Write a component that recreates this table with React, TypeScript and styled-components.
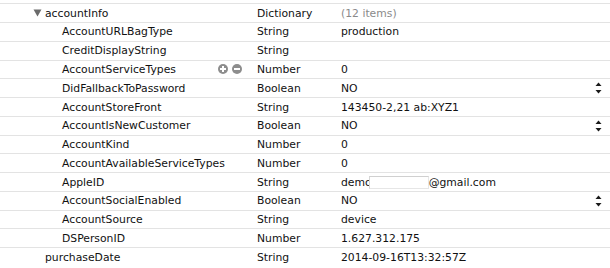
import React from "react";
import styled, { createGlobalStyle } from "styled-components";

const Global = createGlobalStyle`
  html, body { margin: 0; padding: 0; background: #ffffff; }
  body { font-family: "DejaVu Sans", "Liberation Sans", sans-serif; }
`;

const Table = styled.div`
  width: 610px;
  height: 268px;
  overflow: hidden;
  padding-top: 3.3px;
  box-sizing: border-box;
  background: #ffffff;
`;

const Row = styled.div`
  display: grid;
  grid-template-columns: 257px 84px 1fr 23px;
  align-items: center;
  height: 18.77px;
  box-sizing: border-box;
  border-top: 1px solid #e3e3e3;
  font-size: 10.8px;
  color: #111111;
  white-space: nowrap;
`;

const KeyCell = styled.div<{ $level: number }>`
  display: flex;
  align-items: center;
  padding-left: ${(p) => (p.$level === 0 ? 33 : 50)}px;
  padding-right: 15px;
  height: 100%;
`;

const Disclosure = styled.span`
  display: flex;
  align-items: center;
  width: 12px;
  flex: none;
`;

const KeyText = styled.span`
  flex: 1;
`;

const Actions = styled.span`
  display: flex;
  gap: 4px;
  align-items: center;
`;

const RoundButton = styled.span`
  width: 10px;
  height: 10px;
  border-radius: 50%;
  background: #8d8d8d;
  position: relative;
  display: inline-block;
  &::before {
    content: "";
    position: absolute;
    left: 2px;
    top: 4px;
    width: 6px;
    height: 2px;
    background: #ffffff;
  }
`;

const PlusButton = styled(RoundButton)`
  &::after {
    content: "";
    position: absolute;
    left: 4px;
    top: 2px;
    width: 2px;
    height: 6px;
    background: #ffffff;
  }
`;

const TypeCell = styled.div``;

const ValueCell = styled.div<{ $muted?: boolean }>`
  color: ${(p) => (p.$muted ? "#8a8a8a" : "#111111")};
  display: flex;
  align-items: center;
`;

const Redacted = styled.span`
  display: inline-block;
  width: 60px;
  height: 13px;
  margin-left: -3px;
  box-sizing: border-box;
  background: #ffffff;
  border: 1px solid #e6e6e6;
  border-top-color: #d0d0d0;
  border-left-color: #d6d6d6;
`;

const StepperCell = styled.div`
  display: flex;
  justify-content: center;
  align-items: center;
`;

type RowData = {
  key: string;
  level: number;
  type: string;
  value: string;
  expanded?: boolean;
  muted?: boolean;
  actions?: boolean;
  stepper?: boolean;
  redacted?: boolean;
};

const rows: RowData[] = [
  { key: "accountInfo", level: 0, expanded: true, type: "Dictionary", value: "(12 items)", muted: true },
  { key: "AccountURLBagType", level: 1, type: "String", value: "production" },
  { key: "CreditDisplayString", level: 1, type: "String", value: "" },
  { key: "AccountServiceTypes", level: 1, type: "Number", value: "0", actions: true },
  { key: "DidFallbackToPassword", level: 1, type: "Boolean", value: "NO", stepper: true },
  { key: "AccountStoreFront", level: 1, type: "String", value: "143450-2,21 ab:XYZ1" },
  { key: "AccountIsNewCustomer", level: 1, type: "Boolean", value: "NO", stepper: true },
  { key: "AccountKind", level: 1, type: "Number", value: "0" },
  { key: "AccountAvailableServiceTypes", level: 1, type: "Number", value: "0" },
  { key: "AppleID", level: 1, type: "String", value: "", redacted: true },
  { key: "AccountSocialEnabled", level: 1, type: "Boolean", value: "NO", stepper: true },
  { key: "AccountSource", level: 1, type: "String", value: "device" },
  { key: "DSPersonID", level: 1, type: "Number", value: "1.627.312.175" },
  { key: "purchaseDate", level: 0, type: "String", value: "2014-09-16T13:32:57Z" },
];

const Triangle = () => (
  <svg width="9" height="8" viewBox="0 0 9 8">
    <path d="M0.5 0.5 H8.5 L4.5 7.5 Z" fill="#6b6b6b" />
  </svg>
);

const StepperIcon = () => (
  <svg width="7" height="12" viewBox="0 0 7 12">
    <path d="M3.5 0.5 L6.5 4 H0.5 Z" fill="#1a1a1a" />
    <path d="M0.5 8 H6.5 L3.5 11.5 Z" fill="#1a1a1a" />
  </svg>
);

export default function App() {
  return (
    <>
      <Global />
      <Table>
        {rows.map((r) => (
          <Row key={r.key}>
            <KeyCell $level={r.level}>
              <Disclosure>{r.expanded ? <Triangle /> : null}</Disclosure>
              <KeyText>{r.key}</KeyText>
              {r.actions ? (
                <Actions>
                  <PlusButton />
                  <RoundButton />
                </Actions>
              ) : null}
            </KeyCell>
            <TypeCell>{r.type}</TypeCell>
            <ValueCell $muted={r.muted}>
              {r.redacted ? (
                <>
                  demo
                  <Redacted />
                  @gmail.com
                </>
              ) : (
                r.value
              )}
            </ValueCell>
            <StepperCell>{r.stepper ? <StepperIcon /> : null}</StepperCell>
          </Row>
        ))}
      </Table>
    </>
  );
}
